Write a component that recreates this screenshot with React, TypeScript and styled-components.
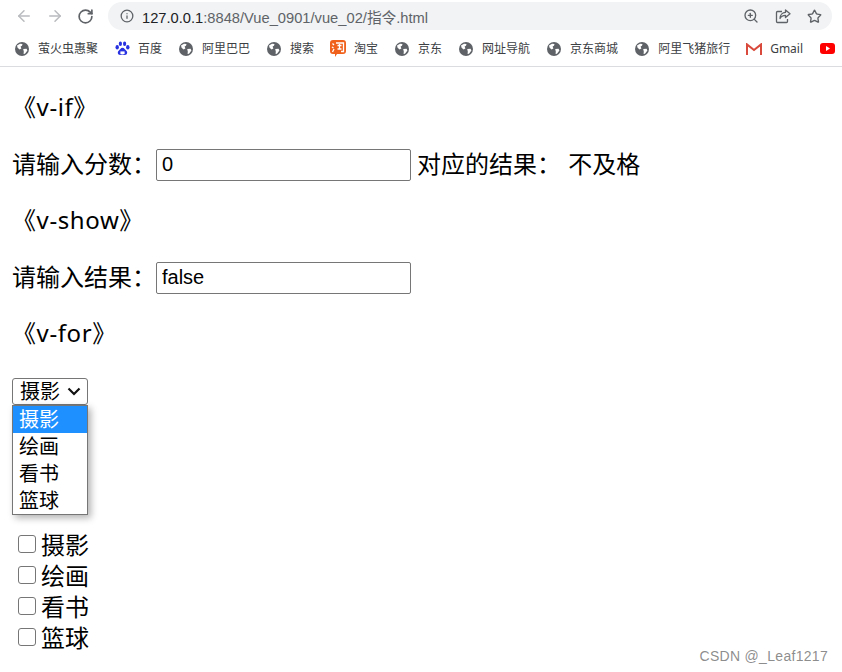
import React from "react";
import styled, { createGlobalStyle } from "styled-components";
import { ArrowLeft, ArrowRight, RotateCw, Info, ZoomIn, Star } from "lucide-react";

const GlobalStyle = createGlobalStyle`
  html, body {
    margin: 0;
    padding: 0;
    background: #fff;
    overflow: hidden;
  }
  body {
    font-family: "Noto Sans", "Noto Sans CJK SC", "Liberation Sans", sans-serif;
    color: #000;
  }
`;

const Page = styled.div`
  position: relative;
  width: 842px;
  height: 672px;
  overflow: hidden;
`;

const Chrome = styled.header`
  height: 67px;
  box-sizing: border-box;
  border-bottom: 1px solid #dadce0;
  overflow: hidden;
`;

const Toolbar = styled.div`
  display: flex;
  align-items: center;
  height: 32px;
  padding-left: 15px;
`;

const NavButton = styled.span<{ $muted?: boolean }>`
  display: flex;
  width: 18px;
  margin-right: 13px;
  color: ${(p) => (p.$muted ? "#b9bbbe" : "#5f6368")};
`;

const Omnibox = styled.div`
  display: flex;
  align-items: center;
  width: 724px;
  height: 28px;
  padding: 0 10px 0 12px;
  box-sizing: border-box;
  border-radius: 14px;
  background: #f1f3f4;
`;

const Url = styled.span`
  flex: 1;
  margin-left: 8px;
  font-family: "Liberation Sans", "Noto Sans CJK SC", sans-serif;
  font-size: 14.7px;
  color: #5f6368;
  b {
    font-weight: 400;
    color: #202124;
  }
`;

const OmniActions = styled.div`
  display: flex;
  align-items: center;
  gap: 16px;
  color: #5f6368;
  svg {
    display: block;
  }
`;

const Bookmarks = styled.nav`
  display: flex;
  align-items: center;
  height: 33px;
  padding-left: 14px;
  white-space: nowrap;
`;

const Bookmark = styled.span`
  display: flex;
  align-items: center;
  gap: 8px;
  margin-right: 16px;
  font-size: 12px;
  line-height: 16px;
  color: #3c4043;
  flex-shrink: 0;
`;

const BookmarkIcon = styled.span`
  display: flex;
  align-items: center;
  justify-content: center;
  width: 16px;
  height: 16px;
`;

const Content = styled.main`
  padding: 12px 12px 0;
`;

const Line = styled.p`
  display: flex;
  align-items: center;
  height: 56.5px;
  margin: 0;
  font-size: 24px;
  line-height: 34px;
  white-space: pre;
  word-spacing: 1px;
`;

const Heading = styled(Line)`
  letter-spacing: 0.6px;
`;

const ScoreInput = styled.input`
  width: 255px;
  height: 32px;
  box-sizing: border-box;
  margin: 2px 6px 0 0;
  padding: 1px 5px;
  border: 1px solid #767676;
  border-radius: 2px;
  background: #fff;
  font-family: "Liberation Sans", sans-serif;
  font-size: 20px;
  color: #000;
`;

const Label = styled.span`
  width: 144px;
`;

const SelectBox = styled.div`
  display: flex;
  align-items: center;
  justify-content: space-between;
  width: 76px;
  height: 27px;
  margin-top: 16.5px;
  padding: 0 6px 0 7px;
  box-sizing: border-box;
  border: 1px solid #767676;
  border-radius: 3px;
  font-size: 20px;
  line-height: 1;
`;

const OptionList = styled.ul`
  position: absolute;
  top: 405px;
  left: 12px;
  width: 76px;
  box-sizing: border-box;
  margin: 0;
  padding: 0;
  list-style: none;
  background: #fff;
  border: 1px solid #767676;
  box-shadow: 3px 3px 7px rgba(0, 0, 0, 0.3);
  font-size: 20px;
`;

const OptionItem = styled.li<{ $active?: boolean }>`
  height: 27px;
  line-height: 28px;
  padding-left: 6px;
  background: ${(p) => (p.$active ? "#1e90ff" : "transparent")};
  color: ${(p) => (p.$active ? "#fff" : "#000")};
`;

const Checks = styled.div`
  display: flex;
  flex-direction: column;
  margin-top: 124px;
`;

const CheckRow = styled.label`
  display: flex;
  align-items: center;
  height: 31px;
  padding-left: 6px;
  font-size: 24px;
  line-height: 31px;
`;

const CheckBox = styled.input`
  appearance: none;
  width: 18px;
  height: 18px;
  margin: 0 5px 2px 0;
  border: 1px solid #767676;
  border-radius: 3px;
  background: #fff;
`;

const Watermark = styled.span`
  position: absolute;
  right: 14px;
  bottom: 8px;
  font-family: "Liberation Sans", sans-serif;
  font-size: 14px;
  color: rgba(120, 120, 120, 0.85);
  letter-spacing: 0.3px;
`;

const Globe = () => (
  <svg width="14" height="14" viewBox="0 0 14 14">
    <circle cx="7" cy="7" r="7" fill="#5f6368" />
    <path d="M2 3.500 5 1.800 7.500 2 7 3.800 5.600 4.600 6.400 6.400 4.600 7.600 2.600 5.800Z" fill="#fff" />
    <path d="M8.200 7 11.600 6.800 12.400 8.600 10 11.800 8.600 12 8.800 9.600Z" fill="#fff" />
  </svg>
);

const Paw = () => (
  <svg width="15" height="16" viewBox="0 0 15 16" fill="#2932e1">
    <ellipse cx="2.200" cy="6.200" rx="1.700" ry="2.200" />
    <ellipse cx="5.400" cy="2.800" rx="1.600" ry="2.300" />
    <ellipse cx="9.600" cy="2.800" rx="1.600" ry="2.300" />
    <ellipse cx="12.800" cy="6.200" rx="1.700" ry="2.200" />
    <path d="M7.500 6.800c2 0 2.400 2 3.800 3 1.600 1.200 1 4.200-1.400 4.200-1 0-1.500-.4-2.400-.4s-1.400.4-2.400.4c-2.400 0-3-3-1.400-4.200 1.400-1 1.800-3 3.800-3Z" />
    <rect x="5.400" y="10.400" width="4.200" height="2.600" fill="#fff" />
  </svg>
);

const Taobao = () => (
  <svg width="16" height="17" viewBox="0 0 16 17">
    <path d="M3 0h10a3 3 0 0 1 3 3v8a3 3 0 0 1-3 3H7l-2 3v-3H3a3 3 0 0 1-3-3V3a3 3 0 0 1 3-3Z" fill="#f0611c" />
    <path d="M2.500 3.500 4 5M2 7l1.500 1M2.500 12 4 9M6 3h7.500v8.500H11M7.500 5.500h4M9.500 4v5M7.500 9h4" stroke="#fff" strokeWidth="1.300" fill="none" />
  </svg>
);

const GmailIcon = () => (
  <svg width="16" height="12" viewBox="0 0 16 12">
    <path d="M1 11V2l7 5.400L15 2v9" fill="none" stroke="#e6e6e6" strokeWidth="1" />
    <path d="M1 12V1.400L8 7l7-5.600V12" fill="none" stroke="#d9493c" strokeWidth="2" />
  </svg>
);

const YouTube = () => (
  <svg width="15" height="11" viewBox="0 0 15 11">
    <rect width="15" height="11" rx="3" fill="#f00" />
    <path d="M6 3v5l4-2.500Z" fill="#fff" />
  </svg>
);

const ShareBox = () => (
  <svg width="16" height="15" viewBox="0 0 16 15" fill="none" stroke="#5f6368" strokeWidth="1.300">
    <path d="M7 2.500H2.500a1 1 0 0 0-1 1v9a1 1 0 0 0 1 1h9a1 1 0 0 0 1-1V10" />
    <path d="M10.500 1 15 4.800 10.500 8.500V6.300C8 6.300 6 7.300 5 9.500 5 6 7.500 3.600 10.500 3.400Z" strokeLinejoin="round" />
  </svg>
);

const Chevron = () => (
  <svg width="14" height="9" viewBox="0 0 14 9">
    <path d="M1.500 1.500 7 7l5.500-5.500" fill="none" stroke="#111" strokeWidth="2.200" />
  </svg>
);

const hobbies = ["摄影", "绘画", "看书", "篮球"];

const marks: { icon: React.ReactNode; name?: string }[] = [
  { icon: <Globe />, name: "萤火虫惠聚" },
  { icon: <Paw />, name: "百度" },
  { icon: <Globe />, name: "阿里巴巴" },
  { icon: <Globe />, name: "搜索" },
  { icon: <Taobao />, name: "淘宝" },
  { icon: <Globe />, name: "京东" },
  { icon: <Globe />, name: "网址导航" },
  { icon: <Globe />, name: "京东商城" },
  { icon: <Globe />, name: "阿里飞猪旅行" },
  { icon: <GmailIcon />, name: "Gmail" },
  { icon: <YouTube /> },
];

const App: React.FC = () => {
  return (
    <Page>
      <GlobalStyle />
      <Chrome>
        <Toolbar>
          <NavButton $muted>
            <ArrowLeft size={18} />
          </NavButton>
          <NavButton $muted>
            <ArrowRight size={18} />
          </NavButton>
          <NavButton>
            <RotateCw size={17} strokeWidth={2.4} />
          </NavButton>
          <Omnibox>
            <Info size={14} color="#5f6368" strokeWidth={2.2} />
            <Url>
              <b>127.0.0.1</b>:8848/Vue_0901/vue_02/指令.html
            </Url>
            <OmniActions>
              <ZoomIn size={16} />
              <ShareBox />
              <Star size={15} strokeWidth={2.2} />
            </OmniActions>
          </Omnibox>
        </Toolbar>
        <Bookmarks>
          {marks.map((m, i) => (
            <Bookmark key={i}>
              <BookmarkIcon>{m.icon}</BookmarkIcon>
              {m.name}
            </Bookmark>
          ))}
        </Bookmarks>
      </Chrome>
      <Content>
        <Heading>《v-if》</Heading>
        <Line>
          <Label>请输入分数：</Label>
          <ScoreInput readOnly value="0" />
          对应的结果： 不及格
        </Line>
        <Heading>《v-show》</Heading>
        <Line>
          <Label>请输入结果：</Label>
          <ScoreInput readOnly value="false" />
        </Line>
        <Heading>《v-for》</Heading>
        <SelectBox>
          摄影
          <Chevron />
        </SelectBox>
        <Checks>
          {hobbies.map((h) => (
            <CheckRow key={h}>
              <CheckBox type="checkbox" readOnly />
              {h}
            </CheckRow>
          ))}
        </Checks>
      </Content>
      <OptionList>
        {hobbies.map((h, i) => (
          <OptionItem key={h} $active={i === 0}>
            {h}
          </OptionItem>
        ))}
      </OptionList>
      <Watermark>CSDN @_Leaf1217</Watermark>
    </Page>
  );
};

export default App;
